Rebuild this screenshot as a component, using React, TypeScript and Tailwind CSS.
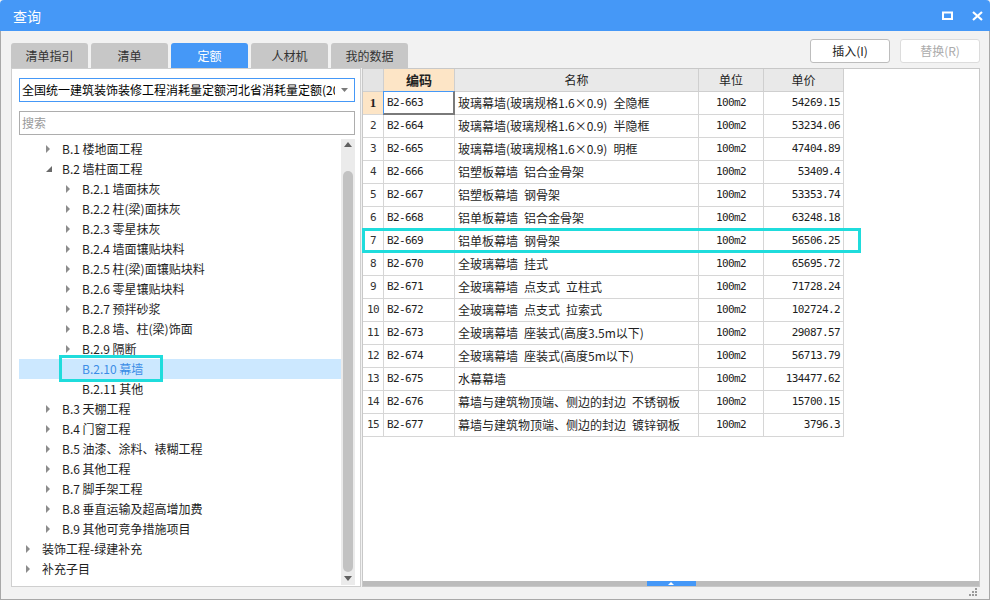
import React from "react";

const tabs = ["清单指引", "清单", "定额", "人材机", "我的数据"];

type Node = { t: string; l: 0 | 1 | 2; icon: "c" | "e" | "n"; sel?: boolean };

const tree: Node[] = [
  { t: "B.1 楼地面工程", l: 1, icon: "c" },
  { t: "B.2 墙柱面工程", l: 1, icon: "e" },
  { t: "B.2.1 墙面抹灰", l: 2, icon: "c" },
  { t: "B.2.2 柱(梁)面抹灰", l: 2, icon: "c" },
  { t: "B.2.3 零星抹灰", l: 2, icon: "c" },
  { t: "B.2.4 墙面镶贴块料", l: 2, icon: "c" },
  { t: "B.2.5 柱(梁)面镶贴块料", l: 2, icon: "c" },
  { t: "B.2.6 零星镶贴块料", l: 2, icon: "c" },
  { t: "B.2.7 预拌砂浆", l: 2, icon: "c" },
  { t: "B.2.8 墙、柱(梁)饰面", l: 2, icon: "c" },
  { t: "B.2.9 隔断", l: 2, icon: "c" },
  { t: "B.2.10 幕墙", l: 2, icon: "n", sel: true },
  { t: "B.2.11 其他", l: 2, icon: "n" },
  { t: "B.3 天棚工程", l: 1, icon: "c" },
  { t: "B.4 门窗工程", l: 1, icon: "c" },
  { t: "B.5 油漆、涂料、裱糊工程", l: 1, icon: "c" },
  { t: "B.6 其他工程", l: 1, icon: "c" },
  { t: "B.7 脚手架工程", l: 1, icon: "c" },
  { t: "B.8 垂直运输及超高增加费", l: 1, icon: "c" },
  { t: "B.9 其他可竞争措施项目", l: 1, icon: "c" },
  { t: "装饰工程-绿建补充", l: 0, icon: "c" },
  { t: "补充子目", l: 0, icon: "c" },
];

const indent = ["pl-[7px]", "pl-[27px]", "pl-[47px]"];

// en spaces match the half-width gaps of the original grid font
const rows: [string, string, string][] = [
  ["B2-663", "玻璃幕墙(玻璃规格1.6×0.9)\u2002全隐框", "54269.15"],
  ["B2-664", "玻璃幕墙(玻璃规格1.6×0.9)\u2002半隐框", "53234.06"],
  ["B2-665", "玻璃幕墙(玻璃规格1.6×0.9)\u2002明框", "47404.89"],
  ["B2-666", "铝塑板幕墙\u2002铝合金骨架", "53409.4"],
  ["B2-667", "铝塑板幕墙\u2002钢骨架", "53353.74"],
  ["B2-668", "铝单板幕墙\u2002铝合金骨架", "63248.18"],
  ["B2-669", "铝单板幕墙\u2002钢骨架", "56506.25"],
  ["B2-670", "全玻璃幕墙\u2002挂式", "65695.72"],
  ["B2-671", "全玻璃幕墙\u2002点支式\u2002立柱式", "71728.24"],
  ["B2-672", "全玻璃幕墙\u2002点支式\u2002拉索式", "102724.2"],
  ["B2-673", "全玻璃幕墙\u2002座装式(高度3.5m以下)", "29087.57"],
  ["B2-674", "全玻璃幕墙\u2002座装式(高度5m以下)", "56713.79"],
  ["B2-675", "水幕幕墙", "134477.62"],
  ["B2-676", "幕墙与建筑物顶端、侧边的封边\u2002不锈钢板", "15700.15"],
  ["B2-677", "幕墙与建筑物顶端、侧边的封边\u2002镀锌钢板", "3796.3"],
];

const mono = "font-['DejaVu_Sans_Mono',monospace] text-[11px] tracking-[-0.6px]";

function Arrow({ kind }: { kind: Node["icon"] }) {
  if (kind === "c")
    return (
      <svg width="5" height="8" viewBox="0 0 5 8">
        <polygon points="0,0 4,4 0,8" fill="#8c8c8c" />
      </svg>
    );
  if (kind === "e")
    return (
      <svg width="6" height="6" viewBox="0 0 6 6">
        <polygon points="6,0 6,6 0,6" fill="#6a6a6a" />
      </svg>
    );
  return null;
}

export default function App() {
  return (
    <div className="relative w-[990px] h-[600px] flex flex-col bg-[#f2f2f2] font-['Noto_Sans_CJK_SC',sans-serif] text-[12px] text-[#1e1e1e] overflow-hidden">
      {/* Title bar */}
      <div className="h-[31px] shrink-0 bg-[#4598f7] rounded-t-[4px] flex items-center pl-[13px] pr-[7px] text-white">
        <span className="text-[14px] leading-none">查询</span>
        <div className="ml-auto flex items-center gap-[19px]">
          <svg width="11" height="9" viewBox="0 0 11 9">
            <rect x="1" y="1.5" width="9" height="6.5" fill="none" stroke="white" strokeWidth="2" />
          </svg>
          <svg width="11" height="10" viewBox="0 0 11 10">
            <path d="M1 1 L10 9 M10 1 L1 9" stroke="white" strokeWidth="2.2" />
          </svg>
        </div>
      </div>

      {/* Body */}
      <div className="flex-1 flex flex-col border-x border-b border-[#a8a8a8] pl-[10px] pr-[9px] pt-[8px]">
        {/* Toolbar */}
        <div className="h-[29px] flex">
          <div className="flex gap-[3px] self-end">
            {tabs.map((t) => (
              <div
                key={t}
                className={
                  t === "定额"
                    ? "w-[77px] h-[25px] rounded-t-[3px] bg-[#4598f7] text-white flex items-center justify-center"
                    : "w-[77px] h-[25px] rounded-t-[3px] bg-[#c7c7c7] text-[#333] flex items-center justify-center"
                }
              >
                {t}
              </div>
            ))}
          </div>
          <div className="ml-auto flex gap-[10px] self-start">
            <div className="w-[80px] h-[24px] bg-white border border-[#bdbdbd] rounded-[3px] flex items-center justify-center text-[#222]">
              插入(I)
            </div>
            <div className="w-[80px] h-[24px] bg-white border border-[#dcdcdc] rounded-[3px] flex items-center justify-center text-[#ababab]">
              替换(R)
            </div>
          </div>
        </div>

        {/* Panels */}
        <div className="h-[519px] flex gap-[1px]">
          {/* Left panel */}
          <div className="w-[350px] bg-white border border-[#cfcfcf] flex flex-col pl-[7px] pr-[4px]">
            <div className="mt-[9px] h-[24px] w-[336px] border border-[#4598f7] flex items-center pl-[2px] pr-[6px]">
              <span className="flex-1 overflow-hidden whitespace-nowrap text-black">
                全国统一建筑装饰装修工程消耗量定额河北省消耗量定额(20
              </span>
              <svg width="7" height="4" viewBox="0 0 7 4" className="ml-[6px]">
                <polygon points="0,0 7,0 3.5,4" fill="#7a7a7a" />
              </svg>
            </div>
            <div className="mt-[9px] h-[24px] w-[336px] border border-[#adadad] flex items-center pl-[2px] text-[#9a9a9a]">
              搜索
            </div>
            <div className="mt-[4px] flex-1 flex w-[336px] min-h-0">
              <div className="w-[322px]">
                {tree.map((n) => (
                  <div
                    key={n.t}
                    className={`h-[20px] flex items-center ${indent[n.l]} ${
                      n.sel ? "bg-[#cce8ff] text-[#3b8de6]" : ""
                    }`}
                  >
                    <div className="w-[16px] flex items-center">
                      <Arrow kind={n.icon} />
                    </div>
                    <span className="whitespace-nowrap leading-none">{n.t}</span>
                  </div>
                ))}
              </div>
              {/* Vertical scrollbar */}
              <div className="w-[14px] h-[446px] bg-[#ebebeb] flex flex-col items-center">
                <svg width="8" height="5" viewBox="0 0 8 5" className="mt-[3px]">
                  <polygon points="0,5 8,5 4,0" fill="#606060" />
                </svg>
                <div className="mt-[24px] w-[10px] h-[401px] rounded-t-full rounded-b-full bg-[#c2c2c2]" />
                <svg width="8" height="5" viewBox="0 0 8 5" className="mt-auto mb-[4px]">
                  <polygon points="0,0 8,0 4,5" fill="#606060" />
                </svg>
              </div>
            </div>
          </div>

          {/* Right panel */}
          <div className="w-[618px] bg-white border border-[#c8c8c8] flex flex-col">
            <div>
              <div className="flex h-[23px]">
                <div className="w-[21px] bg-[#e4e4e4] border-r border-b border-[#cfcfcf]" />
                <div className="w-[71px] bg-[#fde5c6] border-r border-b border-[#cfcfcf] flex items-center justify-center font-bold text-[13px] text-[#222]">
                  编码
                </div>
                <div className="w-[244px] bg-[#e9e9e9] border-r border-b border-[#cfcfcf] flex items-center justify-center">
                  名称
                </div>
                <div className="w-[65px] bg-[#e9e9e9] border-r border-b border-[#cfcfcf] flex items-center justify-center">
                  单位
                </div>
                <div className="w-[80px] bg-[#e9e9e9] border-r border-b border-[#cfcfcf] flex items-center justify-center">
                  单价
                </div>
              </div>
              {rows.map(([code, name, price], i) => (
                <div key={code} className="flex h-[23px]">
                  <div
                    className={
                      i === 0
                        ? "w-[21px] bg-[#fde5c6] border-r border-b border-[#d6d6d6] flex items-center justify-center font-['Liberation_Serif',serif] font-bold text-[13px]"
                        : `w-[21px] border-r border-b border-[#d6d6d6] flex items-center justify-center text-[#333] ${mono}`
                    }
                  >
                    {i + 1}
                  </div>
                  <div className={`relative w-[71px] border-r border-b border-[#d6d6d6] flex items-center pl-[3px] ${mono}`}>
                    {code}
                    {i === 0 && (
                      <div className="absolute -left-px -top-px right-[-1px] bottom-[-1px] border-l border-t border-[#4598f7] border-r-2 border-b-2 border-r-[#7a7a7a] border-b-[#7a7a7a]" />
                    )}
                  </div>
                  <div className="w-[244px] border-r border-b border-[#d6d6d6] flex items-center pl-[3px] whitespace-nowrap overflow-hidden">
                    {name}
                  </div>
                  <div className={`w-[65px] border-r border-b border-[#d6d6d6] flex items-center justify-center ${mono}`}>
                    100m2
                  </div>
                  <div className={`w-[80px] border-r border-b border-[#d6d6d6] flex items-center justify-end pr-[3px] ${mono}`}>
                    {price}
                  </div>
                </div>
              ))}
            </div>
            <div className="mt-auto h-[5px] bg-[#bcbcbc] flex justify-center">
              <div className="w-[49px] h-[5px] bg-[#4598f7] flex items-center justify-center">
                <svg width="6" height="3" viewBox="0 0 6 3">
                  <polygon points="0,3 6,3 3,0" fill="white" />
                </svg>
              </div>
            </div>
          </div>
        </div>

        {/* Footer with resize grip */}
        <div className="flex-1 flex justify-end items-start pt-[1px] pr-[3px]">
          <svg width="8" height="8" viewBox="0 0 8 8">
            <rect x="6" y="0" width="2" height="2" fill="#9a9a9a" />
            <rect x="3" y="3" width="2" height="2" fill="#9a9a9a" />
            <rect x="6" y="3" width="2" height="2" fill="#9a9a9a" />
            <rect x="0" y="6" width="2" height="2" fill="#9a9a9a" />
            <rect x="3" y="6" width="2" height="2" fill="#9a9a9a" />
            <rect x="6" y="6" width="2" height="2" fill="#9a9a9a" />
          </svg>
        </div>
      </div>

      {/* Highlight annotations */}
      <div className="absolute left-[59px] top-[355px] w-[104px] h-[27px] border-[3px] border-[#1fdcdc]" />
      <div className="absolute left-[362px] top-[228px] w-[499px] h-[25px] border-[3px] border-[#1fdcdc]" />
    </div>
  );
}
